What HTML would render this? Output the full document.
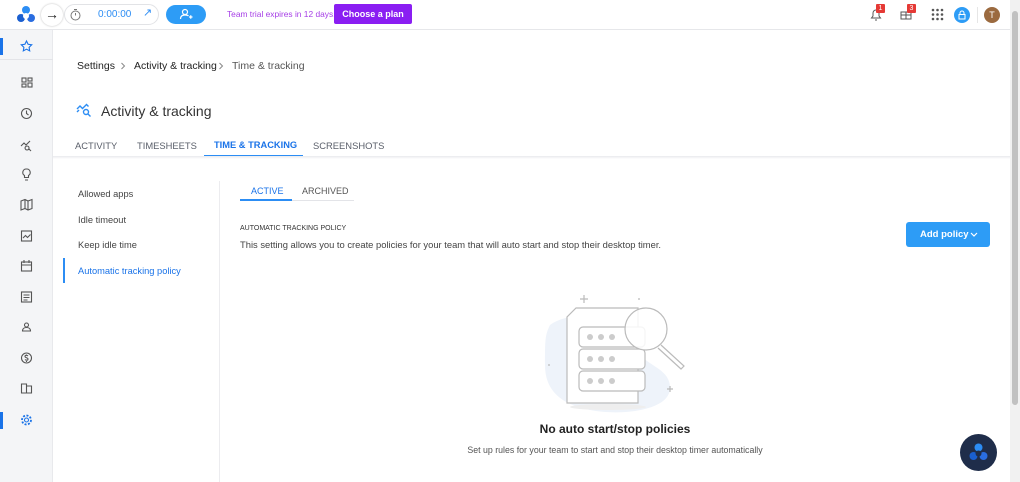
<!DOCTYPE html>
<html><head><style>
*{box-sizing:border-box;margin:0;padding:0}
body{width:1020px;height:482px;overflow:hidden;background:#fff;font-family:"Liberation Sans",sans-serif;position:relative;color:#2a2f3a}
.abs{position:absolute}
#side{left:0;top:0;width:53px;height:482px;background:#f4f5f7;border-right:1px solid #e8e9ec}
#top{left:0;top:0;width:1010px;height:30px;border-bottom:1px solid #e6e7ea;background:#fff}
.tab{position:absolute;top:140px;font-size:9.4px;color:#5a5f6a}
.left{position:absolute;left:78px;font-size:9.3px;color:#444}
.bc{position:absolute;top:60px;font-size:10.5px;color:#222}
</style></head><body>
<div id="side" class="abs"></div>
<div class="abs" style="left:0;top:38px;width:3px;height:17px;background:#1a73e8"></div>
<div class="abs" style="left:0;top:59px;width:53px;height:1px;background:#e3e4e8"></div>
<div class="abs" style="left:0;top:412px;width:3px;height:17px;background:#1a73e8"></div>
<svg class="abs" style="left:0;top:0" width="53" height="482" fill="none" stroke="#555" stroke-width="1.1">
<path d="M26.5 41l1.6 3.3 3.6.5-2.6 2.5.6 3.6-3.2-1.7-3.2 1.7.6-3.6-2.6-2.5 3.6-.5z" stroke="#1a73e8"/>
<rect x="22" y="78" width="4" height="4"/><rect x="28" y="78" width="4" height="3"/><rect x="22" y="84" width="4" height="3"/><rect x="28" y="83" width="4" height="4"/>
<circle cx="26.5" cy="113.5" r="5"/><path d="M26.5 110.5v3l2 1.5"/>
<path d="M21 146l3-3 2 2 4-4M27 146a2 2 0 1 0 .1 0M29 149l2 2"/>
<path d="M26.5 169a3.5 3.5 0 0 1 2 6.5v2h-4v-2a3.5 3.5 0 0 1 2-6.5zM25 180h3"/>
<path d="M21 201l4-1.5 3 1.5 4-1.5v9l-4 1.5-3-1.5-4 1.5zM25 199.5v9M28 201v9"/>
<rect x="21.5" y="231" width="10" height="10"/><path d="M23 238l2.5-2.5 2 2 3-3"/>
<rect x="21.5" y="262" width="10" height="9"/><path d="M21.5 265h10M24 260v3M29 260v3"/>
<rect x="21.5" y="292" width="10" height="10"/><path d="M23.5 295h6M23.5 297.5h6M23.5 300h4"/>
<circle cx="26.5" cy="325" r="2"/><path d="M22.5 331c0-2.5 2-3.5 4-3.5s4 1 4 3.5z"/>
<circle cx="26.5" cy="358" r="5"/><path d="M28 356c-1-1-3-1-3 .5s3 1 3 2.5-2 1.5-3 .5M26.5 354.5v1M26.5 361v1"/>
<path d="M21.5 384h5v9h-5zM26.5 386h5v7h-5z"/>
<circle cx="26.5" cy="420" r="2" stroke="#1a73e8"/><circle cx="26.5" cy="420" r="4.5" stroke="#1a73e8" stroke-dasharray="2 1.5" stroke-width="1.8"/>
</svg>
<div id="top" class="abs"></div>
<svg class="abs" style="left:16px;top:5px" width="20" height="20"><circle cx="10" cy="5" r="4" fill="#2c8df4"/><circle cx="5" cy="13" r="4" fill="#1a5fd0"/><circle cx="15" cy="13" r="4" fill="#2a6de0"/><circle cx="10" cy="11" r="3" fill="#fff"/></svg>
<div class="abs" style="left:41px;top:4px;width:22px;height:22px;border-radius:50%;background:#fff;box-shadow:0 0 2px #bbb;text-align:center;font-size:14px;line-height:21px;color:#222">→</div>
<div class="abs" style="left:64px;top:4px;width:95px;height:21px;border-radius:11px;border:1px solid #e2e3e6"></div>
<svg class="abs" style="left:69px;top:8px" width="13" height="13" fill="none" stroke="#777"><circle cx="6.5" cy="7.5" r="4.5"/><path d="M6.5 7.5V5M5 1.5h3"/></svg>
<div class="abs" style="left:98px;top:9px;font-size:10px;color:#2c8df4">0:00:00</div>
<div class="abs" style="left:143px;top:6px;font-size:11px;color:#2c8df4">↗</div>
<div class="abs" style="left:166px;top:5px;width:40px;height:19px;border-radius:10px;background:#2d9cf6"></div>
<svg class="abs" style="left:179px;top:8px" width="14" height="13" fill="none" stroke="#fff" stroke-width="1.2"><circle cx="6" cy="4" r="2.5"/><path d="M1.5 11c0-3 2-4 4.5-4s3 .5 3.5 1M10 9h3.5M11.75 7.3v3.5"/></svg>
<div class="abs" style="left:227px;top:9px;font-size:8.4px;color:#a63ee6;white-space:nowrap">Team trial expires in 12 days.</div>
<div class="abs" style="left:334px;top:4px;width:78px;height:20px;background:#8a1ef2;border-radius:2px;color:#fff;font-size:9px;font-weight:bold;text-align:center;line-height:20px">Choose a plan</div>
<svg class="abs" style="left:868px;top:6px" width="16" height="16" fill="none" stroke="#555"><path d="M3.5 12h9l-1.5-2V7a3 3 0 0 0-6 0v3zM7 14h2"/></svg>
<div class="abs" style="left:876px;top:4px;width:9px;height:9px;background:#e53935;color:#fff;font-size:7px;text-align:center;line-height:9px;border-radius:1px">1</div>
<svg class="abs" style="left:899px;top:7px" width="14" height="14" fill="none" stroke="#555"><rect x="2" y="5" width="10" height="7"/><path d="M7 5v7M2 8h10"/></svg>
<div class="abs" style="left:907px;top:4px;width:9px;height:9px;background:#e53935;color:#fff;font-size:7px;text-align:center;line-height:9px;border-radius:1px">3</div>
<svg class="abs" style="left:931px;top:8px" width="13" height="13" fill="#555"><circle cx="2" cy="2" r="1.3"/><circle cx="6.5" cy="2" r="1.3"/><circle cx="11" cy="2" r="1.3"/><circle cx="2" cy="6.5" r="1.3"/><circle cx="6.5" cy="6.5" r="1.3"/><circle cx="11" cy="6.5" r="1.3"/><circle cx="2" cy="11" r="1.3"/><circle cx="6.5" cy="11" r="1.3"/><circle cx="11" cy="11" r="1.3"/></svg>
<div class="abs" style="left:954px;top:7px;width:16px;height:16px;border-radius:50%;background:#2d9cf6"></div>
<svg class="abs" style="left:957px;top:10px" width="10" height="10" fill="none" stroke="#fff"><rect x="2" y="4.5" width="6" height="4.5"/><path d="M3 4.5V3a2 2 0 0 1 4 0v1.5"/></svg>
<div class="abs" style="left:977px;top:7px;width:1px;height:16px;background:#e6e6e6"></div>
<div class="abs" style="left:984px;top:7px;width:16px;height:16px;border-radius:50%;background:#9b6a3f;color:#fff;font-size:9px;text-align:center;line-height:16px">T</div>
<div class="abs" style="left:1010px;top:0;width:10px;height:482px;background:#f1f1f1"></div>
<div class="abs" style="left:1012px;top:11px;width:6px;height:394px;background:#c1c1c1;border-radius:3px"></div>
<div class="bc" style="left:77px">Settings</div>
<svg class="abs" style="left:120px;top:62px" width="6" height="8" fill="none" stroke="#888"><path d="M1.5 1l3 3-3 3"/></svg>
<div class="bc" style="left:134px">Activity &amp; tracking</div>
<svg class="abs" style="left:218px;top:62px" width="6" height="8" fill="none" stroke="#888"><path d="M1.5 1l3 3-3 3"/></svg>
<div class="bc" style="left:232px;color:#555">Time &amp; tracking</div>
<svg class="abs" style="left:76px;top:102px" width="17" height="15" fill="none" stroke="#2c8df4" stroke-width="1.4"><path d="M1 7l3-3 2.5 2.5 4-4 2 2"/><circle cx="10" cy="10" r="2.5"/><path d="M12 12l2.5 2.5M1 10l2-2"/></svg>
<div class="abs" style="left:101px;top:103px;font-size:14px;color:#333">Activity &amp; tracking</div>
<div class="tab" style="left:75px">ACTIVITY</div>
<div class="tab" style="left:137px">TIMESHEETS</div>
<div class="tab" style="left:214px;color:#1a73e8;font-weight:bold;font-size:9.3px">TIME &amp; TRACKING</div>
<div class="tab" style="left:313px">SCREENSHOTS</div>
<div class="abs" style="left:204px;top:155px;width:99px;height:2px;background:#2c8df4"></div>
<div class="abs" style="left:53px;top:156px;width:957px;height:3px;background:linear-gradient(#e9eaed,#fff)"></div>
<div class="abs" style="left:219px;top:181px;width:1px;height:301px;background:#ececef"></div>
<div class="left" style="top:189px">Allowed apps</div>
<div class="left" style="top:215px">Idle timeout</div>
<div class="left" style="top:240px">Keep idle time</div>
<div class="abs" style="left:63px;top:258px;width:2px;height:25px;background:#2c8df4"></div>
<div class="left" style="top:266px;color:#1a73e8">Automatic tracking policy</div>
<div class="abs" style="left:251px;top:186px;font-size:9px;color:#1a73e8">ACTIVE</div>
<div class="abs" style="left:302px;top:186px;font-size:9px;color:#555">ARCHIVED</div>
<div class="abs" style="left:240px;top:200px;width:114px;height:1px;background:#e3e4e8"></div>
<div class="abs" style="left:240px;top:199px;width:52px;height:2px;background:#2c8df4"></div>
<div class="abs" style="left:240px;top:225px;font-size:7px;color:#333">AUTOMATIC TRACKING POLICY</div>
<div class="abs" style="left:240px;top:239px;font-size:9.4px;color:#444;white-space:nowrap">This setting allows you to create policies for your team that will auto start and stop their desktop timer.</div>
<div class="abs" style="left:906px;top:222px;width:84px;height:25px;background:#2d9cf6;border-radius:3px;color:#fff;font-size:9.5px;font-weight:bold;line-height:25px;padding-left:14px">Add policy</div>
<svg class="abs" style="left:970px;top:232px" width="8" height="6" fill="none" stroke="#fff" stroke-width="1.2"><path d="M1 1l3 3 3-3"/></svg>
<svg class="abs" style="left:520px;top:285px" width="180" height="130" fill="none" stroke="#bbb" stroke-width="1.2">
<path d="M30 40c20-15 70-12 80 15s40 25 40 48-50 28-80 22-45-20-45-45 0-30 5-40z" fill="#eef3fa" stroke="none"/>
<path d="M64 10v8M60 14h8M118 14h2M150 101v6M147 104h6M28 80h2"/>
<path d="M56 23h62v95H47V32z" fill="#fff"/>
<rect x="59" y="42" width="66" height="20" rx="4" fill="#fff"/><rect x="59" y="64" width="66" height="20" rx="4" fill="#fff"/><rect x="59" y="86" width="66" height="20" rx="4" fill="#fff"/>
<g fill="#ccc" stroke="none"><circle cx="70" cy="52" r="3"/><circle cx="81" cy="52" r="3"/><circle cx="92" cy="52" r="3"/><circle cx="70" cy="74" r="3"/><circle cx="81" cy="74" r="3"/><circle cx="92" cy="74" r="3"/><circle cx="70" cy="96" r="3"/><circle cx="81" cy="96" r="3"/><circle cx="92" cy="96" r="3"/></g>
<circle cx="126" cy="44" r="21" fill="#fff" fill-opacity=".85"/>
<path d="M141 60l23 21-3 3-23-21"/>
<ellipse cx="88" cy="122" rx="38" ry="3" fill="#eee" stroke="none"/>
</svg>
<div class="abs" style="left:0;top:422px;width:1230px;text-align:center;font-size:12px;font-weight:bold;color:#222">No auto start/stop policies</div>
<div class="abs" style="left:0;top:445px;width:1230px;text-align:center;font-size:8.8px;color:#555">Set up rules for your team to start and stop their desktop timer automatically</div>
<div class="abs" style="left:960px;top:434px;width:37px;height:37px;border-radius:50%;background:#1f2d4a"></div>
<svg class="abs" style="left:968px;top:442px" width="21" height="21"><circle cx="10.5" cy="5.5" r="4" fill="#2c8df4"/><circle cx="5.5" cy="14" r="4" fill="#1a5fd0"/><circle cx="15.5" cy="14" r="4" fill="#2a6de0"/><circle cx="10.5" cy="11.5" r="3" fill="#1f2d4a"/></svg>
</body></html>
